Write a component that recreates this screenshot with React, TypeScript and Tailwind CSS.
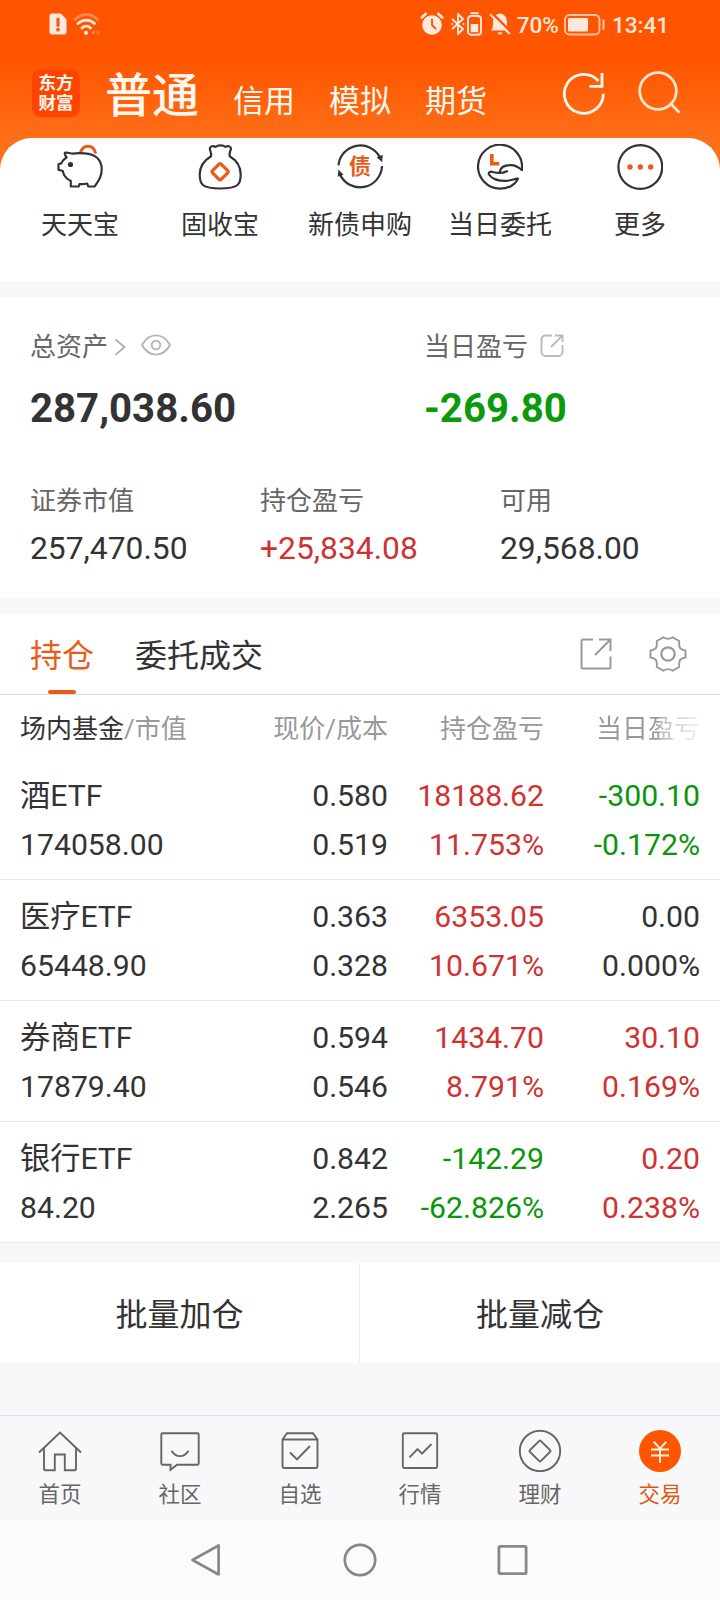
import React from 'react';
import clsx from 'clsx';

type Tone = 'up' | 'down' | 'flat';

interface Holding {
  name: string;
  value: string;
  price: string;
  cost: string;
  profit: [string, string];
  profitTone: Tone;
  today: [string, string];
  todayTone: Tone;
}

const holdings: Holding[] = [
  { name: '酒ETF', value: '174058.00', price: '0.580', cost: '0.519', profit: ['18188.62', '11.753%'], profitTone: 'up', today: ['-300.10', '-0.172%'], todayTone: 'down' },
  { name: '医疗ETF', value: '65448.90', price: '0.363', cost: '0.328', profit: ['6353.05', '10.671%'], profitTone: 'up', today: ['0.00', '0.000%'], todayTone: 'flat' },
  { name: '券商ETF', value: '17879.40', price: '0.594', cost: '0.546', profit: ['1434.70', '8.791%'], profitTone: 'up', today: ['30.10', '0.169%'], todayTone: 'up' },
  { name: '银行ETF', value: '84.20', price: '0.842', cost: '2.265', profit: ['-142.29', '-62.826%'], profitTone: 'down', today: ['0.20', '0.238%'], todayTone: 'up' },
];

const toneClass: Record<Tone, string> = {
  up: 'text-[#d03232]',
  down: 'text-[#0a960a]',
  flat: 'text-[#333333]',
};

const StatusBar = () => (
  <div className="flex h-[50px] items-center pl-[49px] pr-[51px] text-[#ffe9dc]">
    <svg width="18" height="22" viewBox="0 0 18 22" className="mt-[-3px]">
      <path d="M3 0.5h9l5.5 6V19a2.500 2.500 0 0 1-2.500 2.500H3A2.500 2.500 0 0 1 .5 19V3A2.500 2.500 0 0 1 3 .5z" fill="currentColor" />
      <path d="M9 6v6.500" stroke="#e8601c" strokeWidth="3.200" strokeLinecap="round" />
      <circle cx="9" cy="16.700" r="1.900" fill="#e8601c" />
    </svg>
    <svg width="28" height="24" viewBox="0 0 28 24" className="ml-[6px] mt-[-2px]" fill="none" strokeWidth="2.800" strokeLinecap="round">
      <path d="M2 7.500C8.500 1 18 1 24.500 7.500" stroke="#ff8a4d" />
      <path d="M5 11.500c4.700-4.600 12-4.600 16.500 0M9 16c2.500-2.500 6-2.500 8.500 0" stroke="currentColor" />
      <circle cx="13" cy="20.800" r="2.100" fill="currentColor" />
      <path d="M18.500 20.500l3-2.500v5zM27 20.500l-3-2.500v5z" fill="#ff8a4d" />
    </svg>

    <div className="ml-auto flex items-center">
      <svg width="24" height="24" viewBox="0 0 24 24" className="mt-[-2px]">
        <circle cx="12" cy="13" r="9.800" fill="currentColor" />
        <path d="M1.800 5.500l4-3.700M22.200 5.500l-4-3.700" stroke="currentColor" strokeWidth="2.600" strokeLinecap="round" />
        <path d="M12 7.500V13l3.500 3.500" stroke="#f2601c" strokeWidth="2" fill="none" strokeLinecap="round" />
      </svg>
      <svg width="14" height="24" viewBox="0 0 14 24" className="ml-[7px] mt-[-2px]" fill="none" stroke="currentColor" strokeWidth="1.900">
        <path d="M1 7l11 10-5 5V2l5 5L1 17" strokeLinejoin="round" />
        <circle cx="1.200" cy="12" r="1" fill="currentColor" stroke="none" />
        <circle cx="12.600" cy="12" r="1" fill="currentColor" stroke="none" />
      </svg>
      <svg width="15" height="24" viewBox="0 0 15 24" className="ml-[2px] mt-[-2px]">
        <path d="M3.500 1.200h8" stroke="currentColor" strokeWidth="2" />
        <rect x="1" y="4" width="13" height="18.800" rx="3" fill="none" stroke="currentColor" strokeWidth="1.900" />
        <rect x="3.700" y="12" width="7.500" height="8.200" fill="currentColor" />
      </svg>
      <svg width="22" height="24" viewBox="0 0 22 24" className="ml-[7px] mt-[-2px]">
        <path d="M2 18.500c1.500-1.500 2-3 2-8.500 0-5 3-8 7-8.500 4 .5 7 3.500 7 8.500 0 5.500.5 7 2 8.500z" fill="currentColor" />
        <path d="M8.500 20.500h5a2.500 2 0 0 1-5 0z" fill="currentColor" />
        <path d="M2.500 .5l19.500 19.500" stroke="#ff5500" strokeWidth="2.500" />
        <path d="M1 2.200l19.800 19.800" stroke="currentColor" strokeWidth="2" />
      </svg>
      <span className="ml-[6px] text-[22.500px] font-medium leading-6">70%</span>
      <svg width="42" height="22" viewBox="0 0 42 22" className="ml-[5px]">
        <rect x="1" y="1" width="34.500" height="19.500" rx="4.500" fill="none" stroke="currentColor" strokeWidth="1.900" opacity="0.75" />
        <rect x="4" y="4" width="20" height="13.500" rx="1.500" fill="currentColor" />
        <path d="M39.500 5.500v10.500" stroke="currentColor" strokeWidth="2" opacity="0.75" />
      </svg>
      <span className="ml-[6px] text-[22.500px] font-medium leading-6">13:41</span>
    </div>
  </div>
);

const Header = () => (
  <div className="flex h-[86px] items-center pl-8 pr-[39px] text-[#fff8ee]">
    <div className="flex size-12 flex-col items-center justify-center rounded-[9px] bg-[#ff4400] text-[17.500px] font-bold leading-[20px]">
      <span>东方</span>
      <span>财富</span>
    </div>
    <div className="ml-[25px] flex items-baseline gap-[34px] pt-[11px] text-[31px] leading-[48px]">
      <span className="text-[47px] font-medium">普通</span>
      <span>信用</span>
      <span>模拟</span>
      <span>期货</span>
    </div>
    <svg width="44" height="44" viewBox="0 0 44 44" className="ml-auto" fill="none" stroke="currentColor" strokeWidth="2.800">
      <path d="M42.300 22.800A19.500 19.500 0 1 1 37.500 10" />
      <path d="M41 2v13.300H28.500" />
    </svg>
    <svg width="44" height="44" viewBox="0 0 44 44" className="ml-[32px]" fill="none" stroke="#ffe6cf" strokeWidth="2.700">
      <circle cx="21" cy="20" r="18.300" />
      <path d="M34 33l8.500 8.800" />
    </svg>
  </div>
);

const PiggyIcon = () => (
  <svg width="46" height="46" viewBox="0 0 46 46" fill="none" stroke="#333" strokeWidth="2.200">
    <path d="M23.500 8.500C25 4 28 2.300 31 2.300s6.500 2 7.700 7.200" stroke="#ea5b1a" strokeWidth="3" />
    <path d="M7.800 8.800c2.500-.8 5 .8 8 .8 3-.6 7-.6 12-.3C38.500 9.800 44.700 16 44.700 25c0 8-3 11.500-7 17.500h-6.500l-1-3c-2.500.6-5 .6-7.700.5l-.8 2.500h-7.900V37C10.500 35.500 8.500 33.500 7 31l-1.200-4-4.300-1.300v-5.500l2.600-.8c1.200-2.500 3-4.500 5.500-5.900C8.500 12 7.300 10.500 7.800 8.800z" strokeLinejoin="round" />
    <circle cx="13.500" cy="20.500" r="2.600" fill="#333" stroke="none" />
  </svg>
);

const BagIcon = () => (
  <svg width="46" height="46" viewBox="0 0 46 46" fill="none" stroke="#333" strokeWidth="2.200">
    <path d="M14 12.200c.8-3.200-1-5.200-1.200-7.500.4-3 3.500-3 6-1.800C20.500.9 26.500.9 28.200 2.900c2.500-1.200 5.600-1 5.800 1.800-.3 2.300-2.300 4.300-1.300 7.500C40 16.500 43.700 22 43.700 30.500c0 10-2.500 14-20.500 14S2.700 40.500 2.700 30.500C2.700 22 7 16.500 14 12.200z" strokeLinejoin="round" />
    <rect x="17" y="21.600" width="12.200" height="12.200" rx="1.500" transform="rotate(45 23.100 27.700)" stroke="#ea5b1a" strokeWidth="3.200" />
  </svg>
);

const BondIcon = () => (
  <div className="grid size-[46px] place-items-center">
    <svg width="46" height="46" viewBox="0 0 46 46" className="col-start-1 row-start-1" fill="none" stroke="#333" strokeWidth="2.200">
      <path d="M1.500 21.300A22 22 0 0 1 43 13.500" />
      <path d="M45 22A22 22 0 0 1 2.800 30" />
      <path d="M39.700 13.200l6-2.500-.5 7.500zM.7 32.800L1.500 25.500l5 5.300z" fill="#333" stroke="none" />
    </svg>
    <span className="col-start-1 row-start-1 text-[22px] font-bold leading-[22px] text-[#ea5b1a]">债</span>
  </div>
);

const OrderIcon = () => (
  <svg width="46" height="46" viewBox="0 0 46 46" fill="none" stroke="#333" strokeWidth="2.200" strokeLinecap="round" strokeLinejoin="round">
    <path d="M44.800 26A22 22 0 1 0 23 44.700c8.500 0 15.500-4 18-10-4 0-7.500 2.100-12 2.100-8 0-13.500-1-17-6.300-1-2.500 1.500-3.500 4.500-2.300 4 1 9.500 1 13.500-1" />
    <path d="M44.800 26c-3.500-3-6.500-4.700-11-4.800-5-.1-10 1.300-11 6.400" />
    <path d="M14.800 10V19.800h7.500" stroke="#f0580f" strokeWidth="3.600" strokeLinecap="butt" strokeLinejoin="miter" />
  </svg>
);

const MoreIcon = () => (
  <svg width="46" height="46" viewBox="0 0 46 46" fill="none" stroke="#333" strokeWidth="2.200">
    <circle cx="23.300" cy="23" r="21.900" />
    <g fill="#ea5b1a" stroke="none">
      <circle cx="13" cy="23" r="2.700" />
      <circle cx="23.300" cy="23" r="2.700" />
      <circle cx="33.700" cy="23" r="2.700" />
    </g>
  </svg>
);

const shortcuts = [
  { label: '天天宝', icon: <PiggyIcon /> },
  { label: '固收宝', icon: <BagIcon /> },
  { label: '新债申购', icon: <BondIcon /> },
  { label: '当日委托', icon: <OrderIcon /> },
  { label: '更多', icon: <MoreIcon /> },
];

const Shortcuts = () => (
  <div className="grid h-[143px] grid-cols-5 rounded-t-[32px] bg-white px-[10px] pt-[6px]">
    {shortcuts.map((item) => (
      <div key={item.label} className="flex flex-col items-center">
        {item.icon}
        <span className="mt-[19px] text-[26px] leading-8">{item.label}</span>
      </div>
    ))}
  </div>
);

const Assets = () => (
  <div className="h-[301px] bg-white pl-[30px] pt-[34px]">
    <div className="flex">
      <div className="w-[394px]">
        <div className="flex h-8 items-center text-[26px] text-[#666666]">
          <span>总资产</span>
          <svg width="12" height="18" viewBox="0 0 12 18" className="ml-[6px] mt-[-1px]" fill="none" stroke="#aaa" strokeWidth="1.700">
            <path d="M1.500 1.500L10.500 9l-9 7.800" />
          </svg>
          <svg width="30" height="22" viewBox="0 0 30 22" className="ml-[15px] mt-[-5px]" fill="none" stroke="#b5b5b5" strokeWidth="1.900">
            <path d="M1 11C8-1.800 22-1.800 29 11 22 23.800 8 23.800 1 11z" strokeLinejoin="round" />
            <circle cx="15" cy="11" r="4.300" />
          </svg>
        </div>
        <div className="mt-[22px] text-[40.200px] font-bold leading-[48px]">287,038.60</div>
      </div>
      <div>
        <div className="flex h-8 items-center text-[26px] text-[#666666]">
          <span>当日盈亏</span>
          <svg width="24" height="24" viewBox="0 0 24 24" className="ml-[12px] mt-[-3px]" fill="none" stroke="#bbb" strokeWidth="1.900">
            <path d="M12 1.500H5.500a4 4 0 0 0-4 4V18a4 4 0 0 0 4 4h13a4 4 0 0 0 4-4v-7M15 1.500h7.500V8M22.500 1.500L11 13" />
          </svg>
        </div>
        <div className="mt-[22px] text-[40.200px] font-bold leading-[48px] text-[#0a9a0a]">-269.80</div>
      </div>
    </div>

    <div className="mt-[52px] flex">
      <div className="w-[230px]">
        <div className="text-[26px] leading-8 text-[#666666]">证券市值</div>
        <div className="mt-[11px] text-[31.800px] leading-10">257,470.50</div>
      </div>
      <div className="w-[240px]">
        <div className="text-[26px] leading-8 text-[#666666]">持仓盈亏</div>
        <div className="mt-[11px] text-[31.800px] leading-10 text-[#d03232]">+25,834.08</div>
      </div>
      <div>
        <div className="text-[26px] leading-8 text-[#666666]">可用</div>
        <div className="mt-[11px] text-[31.800px] leading-10">29,568.00</div>
      </div>
    </div>
  </div>
);

const PositionTabs = () => (
  <div className="flex h-[81px] border-b border-[#dddddd] bg-white pl-[30px] pr-[33px]">
    <div className="flex flex-col items-center text-[32px] text-[#ea5b1a]">
      <span className="leading-[84px]">持仓</span>
      <div className="mt-[-8px] h-1 w-7 shrink-0 rounded-full bg-[#ea5b1a]"></div>
    </div>
    <span className="ml-[41px] text-[32px] leading-[84px]">委托成交</span>
    <div className="ml-auto flex items-center">
      <svg width="32" height="32" viewBox="0 0 32 32" fill="none" stroke="#999" strokeWidth="2">
        <path d="M13 1.500H3A1.500 1.500 0 0 0 1.500 3v26A1.500 1.500 0 0 0 3 30.500h26a1.500 1.500 0 0 0 1.500-1.500V18.500M19 1.500h11.500V13M30.500 1.500L15 17" />
      </svg>
      <svg width="38" height="38" viewBox="0 0 38 38" className="ml-[37px]" fill="none" stroke="#999" strokeWidth="1.900" strokeLinejoin="round">
        <path d="M14.300 2.300Q19 5.500 23.700 2.300L30.200 6Q29.800 11.800 31.500 13.500Q33.500 15.300 36.500 15.500V22.500Q33.500 22.700 31.500 24.500Q29.800 26.200 30.200 32L23.700 35.700Q19 32.500 14.300 35.700L7.800 32Q8.200 26.200 6.500 24.500Q4.500 22.700 1.500 22.500V15.500Q4.500 15.300 6.500 13.500Q8.200 11.800 7.800 6Z" />
        <circle cx="19" cy="19" r="6.700" strokeWidth="2.200" />
      </svg>
    </div>
  </div>
);

const columns = 'grid grid-cols-[208px_160px_156px_156px] px-5';

const Holdings = () => (
  <div className="bg-white">
    <div className={clsx(columns, 'h-16 text-right text-[26px] leading-[68px] text-[#999999]')}>
      <div className="whitespace-nowrap text-left">
        <span className="text-[#333333]">场内基金</span>/市值
      </div>
      <div>现价/成本</div>
      <div>持仓盈亏</div>
      <div className="bg-[linear-gradient(90deg,#999999_73%,#bbbbbb_75%,#f5f5f5_100%)] bg-clip-text text-transparent">当日盈亏</div>
    </div>
    {holdings.map((h) => (
      <div key={h.name} className={clsx(columns, 'h-[121px] border-b border-[#e8eaec] pt-3 text-right text-[30.200px] leading-[49px]')}>
        <div className="text-left">
          <div>{h.name}</div>
          <div>{h.value}</div>
        </div>
        <div>
          <div>{h.price}</div>
          <div>{h.cost}</div>
        </div>
        <div className={toneClass[h.profitTone]}>
          <div>{h.profit[0]}</div>
          <div>{h.profit[1]}</div>
        </div>
        <div className={toneClass[h.todayTone]}>
          <div>{h.today[0]}</div>
          <div>{h.today[1]}</div>
        </div>
      </div>
    ))}
  </div>
);

const HomeIcon = () => (
  <path d="M1 21.500L22 1.500l21 20M6 17.500V38a1.200 1.200 0 0 0 1.200 1.200h9.600V23.500h10v15.700h9.900A1.200 1.200 0 0 0 38 38V17.500" />
);

const CommunityIcon = () => (
  <>
    <path d="M4.500 2.300h35a1.200 1.200 0 0 1 1.200 1.200v29a1.200 1.200 0 0 1-1.200 1.200H19l-6.500 5v-5h-8a1.200 1.200 0 0 1-1.200-1.200v-29a1.200 1.200 0 0 1 1.200-1.200z" />
    <path d="M13.500 19.700c4.500 7.200 12.500 7.200 17 0" />
  </>
);

const WatchlistIcon = () => (
  <>
    <path d="M4.500 8.500L9 2.300h26l4.500 6.200V35a2 2 0 0 1-2 2h-31a2 2 0 0 1-2-2zM4.500 8.500h35" />
    <path d="M12 21.500l7 7 13-13.500" />
  </>
);

const MarketIcon = () => (
  <>
    <rect x="4.800" y="2.300" width="34.400" height="34.700" rx="1.500" />
    <path d="M11.500 26.300l8-8.300 4.500 4.700 9.500-9.700" />
  </>
);

const WealthIcon = () => (
  <>
    <circle cx="22" cy="20" r="20.200" />
    <rect x="14.300" y="12.300" width="15.400" height="15.400" rx="1" transform="rotate(45 22 20)" />
  </>
);

const TradeIcon = () => (
  <>
    <circle cx="22" cy="20" r="21" fill="#ff5500" stroke="none" />
    <path d="M15.700 10.700l6.300 7 6.300-7M13 18.500h18M13 24.500h18M22 17.700v14" stroke="#fff3e6" strokeWidth="1.900" />
  </>
);

const tabs = [
  { label: '首页', icon: <HomeIcon /> },
  { label: '社区', icon: <CommunityIcon /> },
  { label: '自选', icon: <WatchlistIcon /> },
  { label: '行情', icon: <MarketIcon /> },
  { label: '理财', icon: <WealthIcon /> },
  { label: '交易', icon: <TradeIcon />, active: true },
];

const BottomTabs = () => (
  <div className="grid h-[105px] grid-cols-6 border-t border-[#dfe2e6] bg-[#f8f8fa] pt-[14px]">
    {tabs.map((tab) => (
      <div key={tab.label} className={clsx('flex flex-col items-center', tab.active ? 'text-[#e0560f]' : 'text-[#666666]')}>
        <svg width="44" height="42" viewBox="0 -1 44 42" fill="none" stroke="currentColor" strokeWidth="1.900">
          {tab.icon}
        </svg>
        <span className="mt-[9px] text-[21.500px] leading-7">{tab.label}</span>
      </div>
    ))}
  </div>
);

const SystemNav = () => (
  <div className="flex h-20 items-center justify-center bg-[#fcfcfc]">
    <svg width="34" height="34" viewBox="0 0 34 34" fill="none" stroke="#888" strokeWidth="2.700" strokeLinejoin="round">
      <path d="M29.600 2.500v29L3.500 17z" />
    </svg>
    <svg width="34" height="34" viewBox="0 0 34 34" className="mx-[120px]" fill="none" stroke="#888" strokeWidth="2.700">
      <circle cx="17" cy="17" r="15.200" />
    </svg>
    <svg width="34" height="34" viewBox="0 0 34 34" fill="none" stroke="#888" strokeWidth="2.800">
      <rect x="1.900" y="3.400" width="27.200" height="27.200" rx="1.200" />
    </svg>
  </div>
);

export default function App() {
  return (
    <div className="w-[720px] bg-[#f7f8fa] font-[Roboto,'Noto_Sans_CJK_SC',sans-serif] text-[#333333]">
      <div className="bg-[linear-gradient(180deg,#ff5500_0px,#ff5500_58px,#ff6e18_138px)]">
        <StatusBar />
        <Header />
        <div className="h-[2px]"></div>
        <Shortcuts />
      </div>
      <div className="h-4"></div>
      <Assets />
      <div className="h-4"></div>
      <PositionTabs />
      <Holdings />
      <div className="mt-5 grid h-[100px] grid-cols-2 bg-white pt-[2px] text-center text-[32px] leading-[100px]">
        <div className="-mt-[2px] h-[100px] border-r border-[#e8eaec] pt-[2px]">批量加仓</div>
        <div>批量减仓</div>
      </div>
      <div className="h-[52px]"></div>
      <BottomTabs />
      <SystemNav />
    </div>
  );
}
